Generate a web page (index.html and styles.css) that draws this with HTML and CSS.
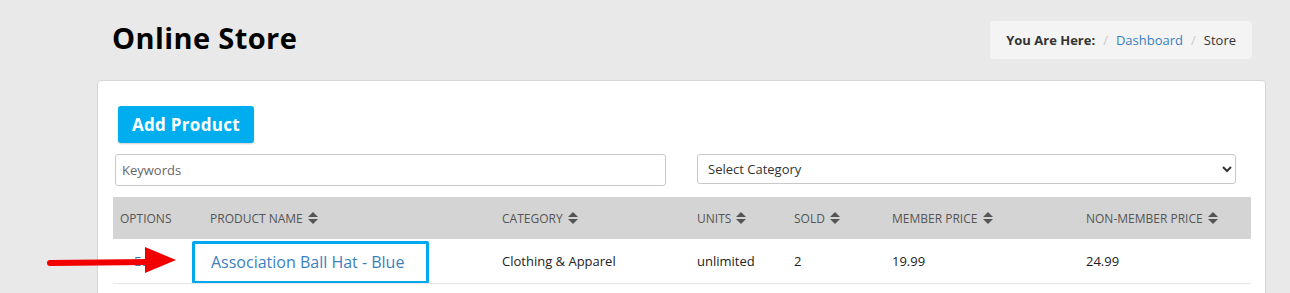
FILE: index.html
```html
<!DOCTYPE html>
<html lang="en">
<head>
  <meta charset="UTF-8">
  <title>Online Store</title>
  <link rel="stylesheet" href="styles.css">
</head>
<body>
  <div class="page">
    <div class="page-header">
      <h1>Online Store</h1>
      <div class="breadcrumb">
        <strong>You Are Here:</strong>
        <span class="sep">/</span>
        <a href="#">Dashboard</a>
        <span class="sep">/</span>
        <span>Store</span>
      </div>
    </div>

    <div class="card">
      <a href="#" class="btn-add">Add Product</a>

      <div class="filters">
        <input type="text" class="keywords" placeholder="Keywords">
        <select class="category">
          <option>Select Category</option>
        </select>
      </div>

      <table class="products">
        <colgroup>
          <col style="width: 90px">
          <col style="width: 292px">
          <col style="width: 195px">
          <col style="width: 97px">
          <col style="width: 98px">
          <col style="width: 194px">
          <col>
        </colgroup>
        <thead>
          <tr>
            <th>Options</th>
            <th>Product Name <span class="sort"></span></th>
            <th>Category <span class="sort"></span></th>
            <th>Units <span class="sort"></span></th>
            <th>Sold <span class="sort"></span></th>
            <th>Member Price <span class="sort"></span></th>
            <th>Non-Member Price <span class="sort"></span></th>
          </tr>
        </thead>
        <tbody>
          <tr>
            <td class="options"><a href="#">Edit</a></td>
            <td class="name"><a href="#">Association Ball Hat - Blue</a></td>
            <td>Clothing &amp; Apparel</td>
            <td>unlimited</td>
            <td>2</td>
            <td>19.99</td>
            <td>24.99</td>
          </tr>
        </tbody>
      </table>
    </div>
  </div>

  <svg class="pointer" width="140" height="34" viewBox="0 0 140 34">
    <line x1="3" y1="19" x2="102" y2="18" stroke="#f20000" stroke-width="6" stroke-linecap="round"/>
    <polygon points="98,3 129,16 98,29" fill="#f20000"/>
  </svg>
</body>
</html>
```

FILE: styles.css
```css
* {
  margin: 0;
  padding: 0;
  box-sizing: border-box;
}

body {
  font-family: 'Open Sans', 'Noto Sans', sans-serif;
  background: #e9e9e9;
  color: #222;
  font-size: 13px;
  position: relative;
  overflow: hidden;
  height: 293px;
}

a {
  color: #3a7fc3;
  text-decoration: none;
}

.page {
  padding: 0 24px 0 97px;
}

.page-header {
  display: flex;
  justify-content: space-between;
  align-items: flex-start;
  padding: 21px 14px 0 15px;
  height: 80px;
}

h1 {
  font-size: 29px;
  font-weight: 700;
  color: #000;
  line-height: 36px;
  margin-top: -1px;
  letter-spacing: 0.4px;
}

.breadcrumb {
  background: #f4f4f4;
  border-radius: 4px;
  height: 38px;
  padding: 0 16px;
  display: flex;
  align-items: center;
  gap: 8px;
  font-size: 13px;
  color: #333;
}

.breadcrumb strong {
  color: #333;
}

.breadcrumb .sep {
  color: #c8c8c8;
}

.card {
  background: #fff;
  border: 1px solid #d6d6d6;
  border-radius: 4px;
  padding: 25px 14px 20px 15px;
  height: 260px;
}

.btn-add {
  display: inline-block;
  background: #00aeef;
  color: #fff;
  font-weight: 700;
  font-size: 17px;
  letter-spacing: 0.3px;
  line-height: 37px;
  padding: 0 14px;
  border-radius: 3px;
  margin-left: 5px;
  box-shadow: 0 1px 2px rgba(0, 0, 0, 0.2);
}

.filters {
  display: flex;
  margin: 11px 0 11px 2px;
  gap: 31px;
}

.keywords {
  width: 551px;
  height: 32px;
  border: 1px solid #c9c9c9;
  border-radius: 3px;
  padding: 0 6px;
  font-family: inherit;
  font-size: 13px;
  color: #333;
}

.keywords::placeholder {
  color: #666;
}

.category {
  width: 539px;
  height: 30px;
  border: 1px solid #c9c9c9;
  border-radius: 3px;
  padding: 0 6px;
  font-family: inherit;
  font-size: 13px;
  color: #333;
  background: #fff;
}

.products {
  width: 1138px;
  border-collapse: collapse;
  table-layout: fixed;
}

.products th {
  background: #d4d4d4;
  height: 42px;
  text-align: left;
  text-transform: uppercase;
  font-size: 12px;
  font-weight: 400;
  color: #555;
  padding: 0 7px;
  white-space: nowrap;
}

.sort {
  display: inline-block;
  width: 9px;
  height: 12px;
  vertical-align: -1px;
  margin-left: 2px;
  position: relative;
}

.sort::before,
.sort::after {
  content: '';
  position: absolute;
  left: 0;
  border-left: 5px solid transparent;
  border-right: 5px solid transparent;
}

.sort::before {
  top: 0;
  border-bottom: 5px solid #555;
}

.sort::after {
  bottom: 0;
  border-top: 5px solid #555;
}

.products td {
  height: 44px;
  padding: 0 7px;
  border-bottom: 1px solid #e6e6e6;
  font-size: 13px;
  color: #222;
}

.products td.options {
  padding-left: 21px;
}

.products td.name {
  padding: 0;
}

.products td.name a {
  display: block;
  margin: 2px 0 -1px -11px;
  width: 237px;
  height: 43px;
  border: 3px solid #00a8f0;
  border-radius: 2px;
  padding: 0 16px;
  line-height: 37px;
  font-size: 16px;
  color: #3a7fc3;
}

.pointer {
  position: absolute;
  left: 47px;
  top: 244px;
}
```
